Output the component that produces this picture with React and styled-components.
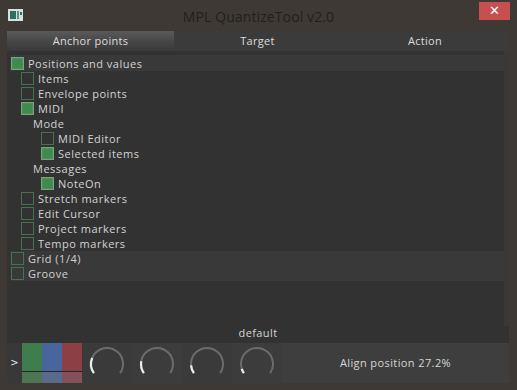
import React from 'react'
import styled, { createGlobalStyle } from 'styled-components'

const Global = createGlobalStyle`
  html, body {
    margin: 0;
    padding: 0;
    background: #3e3935;
  }
  body {
    font-family: "Open Sans", "DejaVu Sans", sans-serif;
  }
`

const Window = styled.div`
  width: 517px;
  height: 390px;
  background: #3e3935;
  display: flex;
  flex-direction: column;
  overflow: hidden;
`

const TitleBar = styled.div`
  height: 31px;
  display: grid;
  grid-template-columns: 1fr auto 1fr;
  align-items: start;
`

const AppIcon = styled.svg`
  margin: 9px 0 0 8px;
  display: block;
`

const Title = styled.div`
  font-size: 14px;
  line-height: 17px;
  margin-top: 8px;
  color: #221f1d;
  letter-spacing: 0.1px;
`

const CloseButton = styled.div`
  justify-self: end;
  margin: 2px 7px 0 0;
  width: 31px;
  height: 18px;
  background: #c74f4f;
  color: #fff;
  font-size: 13px;
  line-height: 18px;
  text-align: center;
  font-family: "DejaVu Sans", sans-serif;
`

const Client = styled.div`
  flex: 1;
  margin: 0 8px 7px 7px;
  background: #323232;
  display: flex;
  flex-direction: column;
`

const Tabs = styled.div`
  height: 20px;
  display: grid;
  grid-template-columns: 167px 167px 1fr;
  background: #3b3b3b;
`

const Tab = styled.div`
  font-size: 11px;
  line-height: 20px;
  letter-spacing: 0.3px;
  text-align: center;
  color: #dcdcdc;
  background: ${({ $active }) =>
    $active ? 'linear-gradient(#5a5a5a, #454545 55%, #3a3a3a)' : '#3b3b3b'};
`

const Body = styled.div`
  flex: 1;
  display: flex;
  border-right: 5px solid #393939;
`

const List = styled.div`
  flex: 1;
  padding: 4px 0 0 3px;
  display: flex;
  flex-direction: column;
`

const Band = styled.div`
  background: #393939;
  padding-top: ${({ $pad }) => $pad || 0}px;
`

const Row = styled.div`
  height: 15px;
  display: flex;
  align-items: center;
  gap: 4px;
  padding-left: ${({ $indent }) => $indent}px;
  font-size: 11px;
  letter-spacing: 0.5px;
  color: #d2d2d2;
  white-space: nowrap;
`

const Box = styled.span`
  width: 13px;
  height: 13px;
  box-sizing: border-box;
  border: 1px solid ${({ $on }) => ($on ? '#79a379' : '#4a714f')};
  background: ${({ $on }) => ($on ? '#3f8a4f' : 'transparent')};
  box-shadow: ${({ $on }) => ($on ? 'inset 0 0 0 1px #4f8f5c' : 'none')};
  flex: none;
`

const Footer = styled.div`
  margin-top: auto;
  display: flex;
  flex-direction: column;
`

const Preset = styled.div`
  text-align: center;
  font-size: 11px;
  line-height: 14px;
  letter-spacing: 0.4px;
  color: #d4d4d4;
  margin-bottom: 3px;
`

const Panel = styled.div`
  height: 40px;
  display: flex;
  background: #383838;
`

const Arrow = styled.div`
  width: 15px;
  font-size: 10px;
  line-height: 40px;
  color: #e6e6e6;
  text-align: center;
  font-family: "DejaVu Sans", sans-serif;
`

const Swatches = styled.div`
  width: 60px;
  display: grid;
  grid-template-columns: repeat(3, 1fr);
  grid-template-rows: 28px 12px;
`

const Swatch = styled.div`
  background: ${({ $c }) => $c};
  border-top: ${({ $line }) => ($line ? '1px solid #262626' : '0')};
`

const KnobCell = styled.div`
  width: 50px;
  display: flex;
  align-items: center;
  justify-content: center;
  background: ${({ $shade }) => $shade};
`

const Readout = styled.div`
  flex: 1;
  background: #3e3e3e;
  font-size: 11px;
  line-height: 40px;
  color: #d6d6d6;
  text-align: center;
  letter-spacing: 0.4px;
`

const rows = [
  { label: 'Items', indent: 11, box: true },
  { label: 'Envelope points', indent: 11, box: true },
  { label: 'MIDI', indent: 11, box: true, on: true },
  { label: 'Mode', indent: 23 },
  { label: 'MIDI Editor', indent: 31, box: true },
  { label: 'Selected items', indent: 31, box: true, on: true },
  { label: 'Messages', indent: 23 },
  { label: 'NoteOn', indent: 31, box: true, on: true },
  { label: 'Stretch markers', indent: 11, box: true },
  { label: 'Edit Cursor', indent: 11, box: true },
  { label: 'Project markers', indent: 11, box: true },
  { label: 'Tempo markers', indent: 11, box: true },
]

const Item = ({ label, indent, box, on }) => (
  <Row $indent={indent}>
    {box && <Box $on={on} />}
    {label}
  </Row>
)

const pt = (cx, cy, r, deg) => {
  const a = (deg * Math.PI) / 180
  return [cx + r * Math.cos(a), cy + r * Math.sin(a)]
}

const arc = (cx, cy, r, from, to) => {
  const [x1, y1] = pt(cx, cy, r, from)
  const [x2, y2] = pt(cx, cy, r, to)
  const large = to - from > 180 ? 1 : 0
  return `M${x1.toFixed(2)} ${y1.toFixed(2)} A${r} ${r} 0 ${large} 1 ${x2.toFixed(2)} ${y2.toFixed(2)}`
}

const Knob = ({ value }) => {
  const start = 145
  const sweep = 250
  return (
    <svg width="40" height="40" viewBox="0 0 40 40">
      <path d={arc(20, 21, 16, start, start + sweep)} fill="none" stroke="#6c6c6c" strokeWidth="2" />
      <path d={arc(20, 21, 16, start, start + sweep * value)} fill="none" stroke="#ececec" strokeWidth="2.2" />
    </svg>
  )
}

const knobs = [
  { value: 0.23, shade: '#3a3a3a' },
  { value: 0.18, shade: '#3c3c3c' },
  { value: 0.12, shade: '#3a3a3a' },
  { value: 0.07, shade: '#3c3c3c' },
]

export default function App() {
  return (
    <Window>
      <Global />
      <TitleBar>
        <AppIcon width="15" height="12" viewBox="0 0 15 12">
          <rect x="0" y="0" width="15" height="12" fill="#d6e0dc" />
          <rect x="2" y="2" width="6" height="8" fill="#2f6e60" />
          <rect x="9" y="2" width="2" height="8" fill="#5d8f84" />
          <rect x="12" y="3" width="2" height="3" fill="#2f6e60" />
        </AppIcon>
        <Title>MPL QuantizeTool v2.0</Title>
        <CloseButton>✕</CloseButton>
      </TitleBar>
      <Client>
        <Tabs>
          <Tab $active>Anchor points</Tab>
          <Tab>Target</Tab>
          <Tab>Action</Tab>
        </Tabs>
        <Body>
          <List>
            <Band $pad={1}>
              <Item label="Positions and values" indent={1} box on />
            </Band>
            {rows.map((r) => (
              <Item key={r.label} {...r} />
            ))}
            <Band>
              <Item label="Grid (1/4)" indent={1} box />
              <Item label="Groove" indent={1} box />
            </Band>
          </List>
        </Body>
        <Footer>
          <Preset>default</Preset>
          <Panel>
            <Arrow>&gt;</Arrow>
            <Swatches>
              <Swatch $c="#3f7d4e" />
              <Swatch $c="#49659e" />
              <Swatch $c="#8c3f44" />
              <Swatch $c="#4e7355" $line />
              <Swatch $c="#596b8d" $line />
              <Swatch $c="#825159" $line />
            </Swatches>
            {knobs.map((k, i) => (
              <KnobCell key={i} $shade={k.shade}>
                <Knob value={k.value} />
              </KnobCell>
            ))}
            <Readout>Align position 27.2%</Readout>
          </Panel>
        </Footer>
      </Client>
    </Window>
  )
}
